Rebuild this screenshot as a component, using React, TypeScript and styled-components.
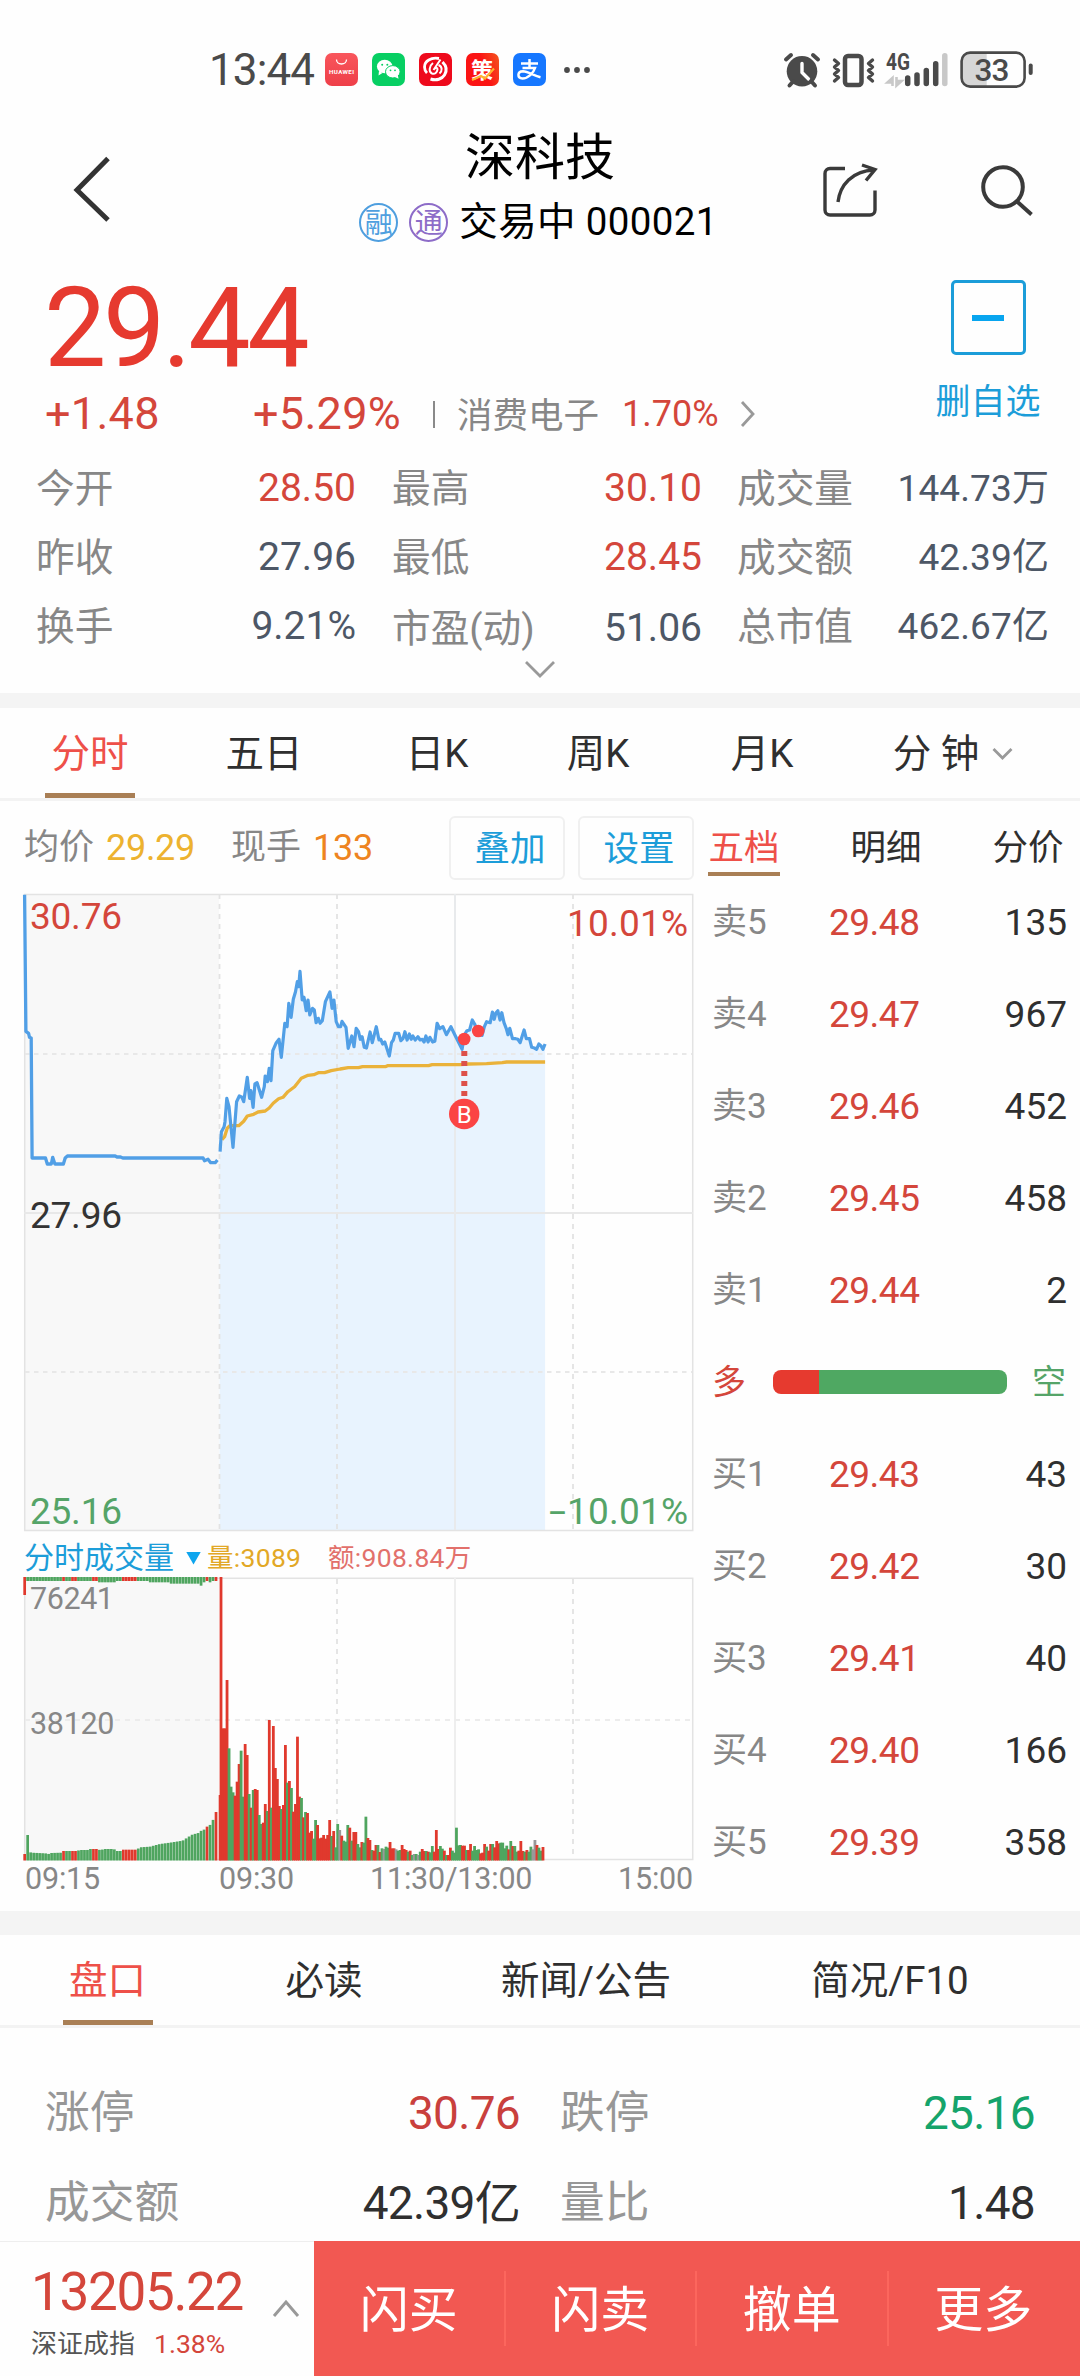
import React from "react";
import styled, { createGlobalStyle } from "styled-components";

const RED = "#d4463b";
const GREEN = "#55a468";
const BLUE = "#1c9dd9";
const GRAY = "#878787";
const INK = "#2f2f2f";
const SLATE = "#4d5766";
const BRONZE = "#a97f55";

const GlobalStyle = createGlobalStyle`
  * { box-sizing: border-box; }
  body {
    margin: 0;
    background: #fefefe;
    font-family: Roboto, "Noto Sans CJK SC", sans-serif;
    color: ${INK};
  }
`;

const Page = styled.main`
  width: 1080px;
  height: 2376px;
  display: flex;
  flex-direction: column;
  background: #fefefe;
  overflow: hidden;
  white-space: nowrap;
`;

/* ---------- status bar ---------- */

const StatusBar = styled.header`
  flex: none;
  height: 104px;
  padding: 35px 52px 0 209px;
  display: flex;
  align-items: center;
  justify-content: space-between;
  color: #4a4a4a;
`;

const StatusGroup = styled.div`
  display: flex;
  align-items: center;
`;

const Clock = styled.span`
  width: 116px;
  font-size: 44px;
  line-height: 50px;
  letter-spacing: -0.9px;
  padding-top: 1px;
`;

const AppBadge = styled.span<{ $bg: string }>`
  width: 33px;
  height: 33px;
  margin-right: 14px;
  border-radius: 7px;
  background: ${(p) => p.$bg};
  display: flex;
  overflow: hidden;
`;

const Dots = styled.svg`
  margin-left: 3px;
`;

/* ---------- title bar ---------- */

const TitleBar = styled.nav`
  flex: none;
  height: 160px;
  display: grid;
  grid-template-columns: 270px 1fr 270px;
`;

const BackSlot = styled.div`
  padding: 50px 0 0 70px;
`;

const TitleBlock = styled.div`
  padding-top: 24px;
  display: flex;
  flex-direction: column;
  align-items: center;
`;

const StockName = styled.h1`
  margin: 0;
  font-size: 50px;
  line-height: 60px;
  font-weight: 400;
  color: #000;
`;

const StockMeta = styled.div`
  display: flex;
  align-items: center;
  height: 44px;
  margin: 12px 3px 0 0;
  font-size: 38.5px;
  line-height: 46px;
  letter-spacing: 0.35px;
  color: #000;
`;

const Mark = styled.span<{ $color: string }>`
  width: 39px;
  height: 39px;
  margin-right: 11px;
  border: 2px solid ${(p) => p.$color};
  border-radius: 50%;
  color: ${(p) => p.$color};
  font-size: 28px;
  line-height: 37px;
  text-align: center;
`;

const ActionSlot = styled.div`
  display: flex;
  gap: 96px;
  padding: 56px 0 0 10px;
`;

/* ---------- quote ---------- */

const Quote = styled.section`
  flex: none;
  height: 188px;
  display: flex;
  justify-content: space-between;
`;

const PriceBlock = styled.div`
  padding: 19px 0 0 44px;
`;

const LastPrice = styled.div`
  font-size: 111px;
  line-height: 90px;
  letter-spacing: -3.3px;
  color: #e63a2f;
`;

const ChangeRow = styled.div`
  display: flex;
  align-items: center;
  height: 50px;
  margin: 16px 0 0 1px;
  line-height: 50px;
`;

const Change = styled.span<{ $w: number }>`
  width: ${(p) => p.$w}px;
  font-size: 45px;
  letter-spacing: 0.3px;
  color: ${RED};
`;

const Sector = styled.span`
  margin-left: 22px;
  padding-top: 3px;
  font-size: 35.5px;
  color: ${GRAY};
`;

const SectorChange = styled.span`
  margin: 0 21px 0 23px;
  font-size: 36px;
  color: ${RED};
`;

const Rule = styled.span`
  width: 2px;
  height: 27px;
  background: #8a8a8a;
`;

const WatchButton = styled.div`
  width: 184px;
  padding-top: 16px;
  display: flex;
  flex-direction: column;
  align-items: center;
  color: ${BLUE};
  font-size: 35px;
  line-height: 44px;
`;

const MinusBox = styled.span`
  width: 75px;
  height: 75px;
  margin-bottom: 26px;
  border: 3px solid ${BLUE};
  border-radius: 5px;
  display: grid;
  place-items: center;
  &::after {
    content: "";
    width: 32px;
    height: 6px;
    background: #08a5ef;
  }
`;

/* ---------- statistics ---------- */

const Stats = styled.section`
  flex: none;
  height: 241px;
  padding: 0 31px 0 36px;
  display: grid;
  grid-template-columns: 320px 346px 1fr;
  grid-auto-rows: 69px;
`;

const Stat = styled.div<{ $col: number; $drop: number }>`
  display: flex;
  justify-content: space-between;
  margin-left: ${(p) => [0, 36, 35][p.$col]}px;
  padding-top: ${(p) => p.$drop}px;
  line-height: 69px;
`;

const StatLabel = styled.span`
  padding-top: 2px;
  font-size: 38.700px;
  color: ${GRAY};
`;

const StatValue = styled.span<{ $color: string; $small?: boolean }>`
  font-size: ${(p) => (p.$small ? 37 : 39)}px;
  letter-spacing: ${(p) => (p.$small ? 0.1 : 0)}px;
  padding-top: 2px;
  color: ${(p) => p.$color};
`;

const Expand = styled.div`
  grid-column: 1 / -1;
  display: flex;
  justify-content: center;
  padding: 1px 6px 0 0;
  height: 34px;
`;

const Band = styled.div<{ $h: number }>`
  flex: none;
  height: ${(p) => p.$h}px;
  background: #f4f4f4;
`;

/* ---------- tabs ---------- */

const Tabs = styled.div<{ $cols: string }>`
  flex: none;
  height: 93px;
  border-bottom: 3px solid #f3f3f3;
  display: grid;
  grid-template-columns: ${(p) => p.$cols};
`;

const Tab = styled.div<{ $active?: boolean }>`
  height: 90px;
  display: flex;
  justify-content: center;
  align-items: center;
  gap: 13px;
  padding-top: 2px;
  font-size: 38.500px;
  line-height: 80px;
  color: ${(p) => (p.$active ? "#ee5049" : INK)};
  background: ${(p) =>
    p.$active ? `linear-gradient(${BRONZE}, ${BRONZE}) center bottom / 90px 5px no-repeat` : "none"};
`;

/* ---------- market area ---------- */

const Market = styled.section`
  flex: none;
  height: 1110px;
  display: grid;
  grid-template-columns: 700px 380px;
`;

const ChartColumn = styled.div`
  display: flex;
  flex-direction: column;
`;

const InfoBar = styled.div`
  height: 89px;
  padding: 4px 0 0 24px;
  display: flex;
  align-items: center;
  font-size: 35px;
  line-height: 60px;
  color: ${GRAY};
`;

const InfoValue = styled.span<{ $color: string; $w: number }>`
  flex: none;
  width: ${(p) => p.$w}px;
  padding-left: 12px;
  font-size: 36px;
  letter-spacing: -0.3px;
  color: ${(p) => p.$color};
`;

const ToolButton = styled.span`
  flex: none;
  width: 116px;
  height: 64px;
  margin-right: 13px;
  padding: 1px 0 0 6px;
  border: 2px solid #f0f0f0;
  border-radius: 6px;
  text-align: center;
  font-size: 35.5px;
  color: ${BLUE};
  &:last-child {
    margin-right: 0;
  }
`;

const VolumeHeader = styled.div`
  height: 40px;
  padding: 8px 0 0 24px;
  display: flex;
  align-items: center;
  line-height: 32px;
`;

const VolumeTitle = styled.span`
  width: 162px;
  font-size: 30px;
  color: ${BLUE};
`;

const VolumeArrow = styled.span`
  width: 15px;
  height: 13px;
  margin-right: 6px;
  background: #0ea5ee;
  clip-path: polygon(0 0, 100% 0, 50% 100%);
`;

const VolumeFigure = styled.span<{ $color: string; $w?: number }>`
  width: ${(p) => (p.$w ? p.$w + "px" : "auto")};
  font-size: 26.500px;
  letter-spacing: 0.300px;
  color: ${(p) => p.$color};
`;

const TimeAxis = styled.div`
  height: 30px;
  display: grid;
  grid-template-columns: 194px 151px 161px 162px;
  padding-left: 25px;
  font-size: 30.5px;
  line-height: 30px;
  letter-spacing: -0.2px;
  color: ${GRAY};
`;

const TimeMark = styled.span<{ $align?: string }>`
  text-align: ${(p) => p.$align || "left"};
`;

const Book = styled.div`
  padding: 0 13px 0 8px;
`;

const BookTabs = styled.div`
  height: 76px;
  padding-right: 3px;
  display: flex;
  justify-content: space-between;
  align-items: flex-start;
`;

const BookTab = styled.span<{ $active?: boolean }>`
  width: 72px;
  height: 75px;
  padding-top: 17px;
  text-align: center;
  font-size: 35.500px;
  line-height: 60px;
  color: ${(p) => (p.$active ? "#ee5049" : INK)};
  border-bottom: 4px solid ${(p) => (p.$active ? BRONZE : "transparent")};
`;

const BookRow = styled.div`
  height: 92px;
  padding-left: 4px;
  display: grid;
  grid-template-columns: 117px 1fr auto;
  align-items: center;
  font-size: 37px;
  line-height: 62px;
`;

const BookLabel = styled.span`
  font-size: 35px;
  color: ${GRAY};
`;

const BookPrice = styled.span`
  letter-spacing: -0.500px;
  color: ${RED};
`;

const BalanceRow = styled.div`
  height: 92px;
  padding: 0 1px 3px 4px;
  display: flex;
  align-items: center;
  justify-content: space-between;
  font-size: 34px;
  line-height: 60px;
`;

const BalanceSide = styled.span<{ $color: string }>`
  color: ${(p) => p.$color};
`;

const Balance = styled.span`
  width: 234px;
  height: 24px;
  margin-left: 2px;
  border-radius: 8px;
  background: linear-gradient(90deg, #e63a2f 46.5px, #4fa862 46.5px);
`;

/* ---------- details ---------- */

const Details = styled.section`
  flex: none;
  height: 213px;
  padding: 39px 45px 0 45px;
  overflow: hidden;
  display: grid;
  grid-template-columns: 475px 1fr;
  grid-auto-rows: 90px;
  column-gap: 40px;
`;

const Detail = styled.div`
  display: flex;
  justify-content: space-between;
  font-size: 44.700px;
  line-height: 92px;
  color: #979797;
`;

const DetailValue = styled.span<{ $color: string }>`
  font-size: 46px;
  letter-spacing: -0.700px;
  color: ${(p) => p.$color};
`;

/* ---------- bottom bar ---------- */

const BottomBar = styled.footer`
  flex: none;
  height: 135px;
  display: flex;
`;

const IndexPanel = styled.div`
  width: 315px;
  border-top: 1px solid #eee;
  display: flex;
  padding: 25px 14px 0 31px;
  justify-content: space-between;
`;

const IndexValue = styled.div`
  font-size: 53px;
  line-height: 50px;
  letter-spacing: -1.3px;
  color: ${RED};
`;

const IndexName = styled.div`
  margin-top: 15px;
  font-size: 26px;
  line-height: 24px;
  color: #555;
`;

const IndexChange = styled.span`
  margin-left: 19px;
  font-size: 26.500px;
  color: ${RED};
`;

const IndexArrow = styled.div`
  padding-top: 30px;
`;

const TradeActions = styled.div`
  flex: 1;
  display: flex;
  background: #f25852;
`;

const TradeAction = styled.span`
  width: 191.500px;
  height: 75px;
  margin-top: 30px;
  font-size: 49px;
  line-height: 79px;
  text-align: center;
  color: #fff;
  border-right: 2px solid #fc665d;
  &:last-child {
    border-right-color: transparent;
  }
`;

/* ---------- icons ---------- */

const StatusIcons = () => (
  <svg width="245" height="40" viewBox="783 49 245 40" fill="none" stroke="#4a4a4a" overflow="visible">
    <circle cx="802" cy="70.3" r="15.3" fill="#4a4a4a" stroke="none" />
    <path d="M802 62.5v9l6.5 6.5" stroke="#fff" strokeWidth="3.4" strokeLinecap="round" strokeLinejoin="round" />
    <path d="M786 58.5l5-4.5M818 58.5l-5-4.5M789.5 84.5l4-4.5M815 84.5l-4-4.5" strokeWidth="4" strokeLinecap="round" />
    <rect x="845" y="55" width="16.500" height="29" rx="3" strokeWidth="4.500" />
    <path d="M834.500 59l4 3.500-4 3.500 4 3.500-4 3.500 4 3.500-4 3.500M872.500 59l-4 3.500 4 3.500-4 3.500 4 3.500-4 3.500 4 3.500" strokeWidth="3.400" strokeLinejoin="round" strokeLinecap="round" />
    <text x="886" y="68.500" fontSize="23" fontWeight="700" fill="#4a4a4a" stroke="none" textLength="24" lengthAdjust="spacingAndGlyphs">4G</text>
    <path d="M892.500 85V77l-5 4.500h4M896.500 76v8.500l5-4.500h-4" stroke="#c8c8c8" strokeWidth="2.600" />
    <path d="M907.700 77v5.500M917 74v8.500M926.300 69.500v13M935.700 62.700v19.800" strokeWidth="5.500" strokeLinecap="round" />
    <path d="M944.800 54.700v27.800" stroke="#c8c8c8" strokeWidth="5.500" strokeLinecap="round" />
    <path d="M986.700 51.500H970a8.500 8.500 0 0 0-8.500 8.500v17a8.500 8.500 0 0 0 8.500 8.500h16.700z" fill="#d6d6d6" stroke="none" />
    <rect x="961.600" y="51.600" width="63" height="34" rx="8.500" strokeWidth="2.600" />
    <path d="M1030.700 64.500v7.500" strokeWidth="4" strokeLinecap="round" />
    <text x="974.500" y="80" fontSize="31.500" fontWeight="500" fill="#4a4a4a" stroke="none" textLength="35" lengthAdjust="spacing">33</text>
  </svg>
);

const StoreGlyph = () => (
  <svg width="33" height="33" viewBox="0 0 33 33">
    <path d="M11.500 6.500a5 4.500 0 0 0 10 0" fill="none" stroke="#fff" strokeWidth="1.300" />
    <text x="4" y="21.300" fontSize="6.200" fontWeight="700" fill="#fff" textLength="25">HUAWEI</text>
  </svg>
);

const ChatGlyph = () => (
  <svg width="33" height="33" viewBox="0 0 33 33">
    <ellipse cx="12.700" cy="13.500" rx="7.800" ry="6.700" fill="#fff" />
    <path d="M7 18l-.5 4.500 4-2.500z" fill="#fff" />
    <ellipse cx="20.800" cy="18.800" rx="7.300" ry="6.200" fill="#fff" stroke="#07cf63" strokeWidth="1" />
    <path d="M23 24l3.500 1.800-.6-3.600z" fill="#fff" />
    <g fill="#07cf63">
      <circle cx="10.200" cy="11.800" r="1" />
      <circle cx="15.300" cy="11.800" r="1" />
      <circle cx="18.500" cy="17.300" r=".9" />
      <circle cx="23" cy="17.300" r=".9" />
    </g>
  </svg>
);

const BrokerGlyph = () => (
  <svg width="33" height="33" viewBox="0 0 33 33" fill="none" stroke="#fff">
    <path d="M20 5.500C12 4 5.500 8 5.500 14c0 2.500 1 4.500 2.500 6" strokeWidth="2.800" />
    <path d="M23.500 9c4 4 4.500 9 2 13-2.500 4-8 6-14 4" strokeWidth="3" />
    <path d="M21.500 6.500L14.500 17M14 10c-4 3-4.500 9-1 10.500 3 1 5-1 5.500-4 .3-2-2-2.500-3-.5" strokeWidth="2" />
    <path d="M19.500 12c4 1.500 4 6 1 8.500" strokeWidth="2" />
  </svg>
);

const StrategyGlyph = () => (
  <svg width="33" height="33" viewBox="0 0 33 33">
    <text x="5" y="25" fontSize="22" fontWeight="700" fill="#fff">策</text>
    <path d="M6 27l9-4 4 2.500 9-10" fill="none" stroke="#ffb22e" strokeWidth="2.200" />
  </svg>
);

const PayGlyph = () => (
  <svg width="33" height="33" viewBox="0 0 33 33">
    <path d="M8 10.500h17M16.500 6v9M9.500 15h12.500c-1.500 5-7 10.500-12.500 10.500-5.500-.5-5.500-7 .5-7.200 5 .2 11 4.500 17.500 6" fill="none" stroke="#fff" strokeWidth="2.500" />
  </svg>
);

const MoreDots = () => (
  <Dots width="28" height="8" viewBox="0 0 28 8" fill="#4a4a4a">
    <circle cx="4" cy="4" r="2.900" />
    <circle cx="14" cy="4" r="2.900" />
    <circle cx="24" cy="4" r="2.900" />
  </Dots>
);

const BackIcon = () => (
  <svg width="44" height="72" viewBox="70 154 44 72" fill="none" stroke="#333" strokeWidth="5">
    <path d="M108 158.500L77 190l31 30" />
  </svg>
);

const ShareIcon = () => (
  <svg width="62" height="62" viewBox="820 160 62 62" fill="none" stroke="#3a3a3a" strokeWidth="3.400">
    <path d="M845 168.500h-15a5 5 0 0 0-5 5v36.500a5 5 0 0 0 5 5h40a5 5 0 0 0 5-5v-19.500" />
    <path d="M838 202c2-17 14-31 36-32" />
    <path d="M862 165l13 4.500-9 11" />
  </svg>
);

const SearchIcon = () => (
  <svg width="60" height="62" viewBox="978 160 60 62" fill="none" stroke="#3a3a3a" strokeWidth="4">
    <circle cx="1003" cy="187" r="19.800" />
    <path d="M1017 201.500l14.500 13" />
  </svg>
);

const Chevron = ({ w, h, d, width = 2.8, color = "#999" }: { w: number; h: number; d: string; width?: number; color?: string }) => (
  <svg width={w} height={h} viewBox={`0 0 ${w} ${h}`} fill="none" stroke={color} strokeWidth={width}>
    <path d={d} />
  </svg>
);

/* ---------- chart data ---------- */

type Pt = [number, number];

const parse = (s: string): Pt[] =>
  s.trim().split(/\s+/).map((p) => {
    const [x, y] = p.split(",").map(Number);
    return [x / 2.24, y / 3 + 800];
  });

const toPath = (pts: Pt[]) => pts.map(([x, y], i) => `${i ? "L" : "M"}${x.toFixed(1)} ${y.toFixed(1)}`).join("");

const auctionLine = parse(`55,284 58,694 64,700 66,712 70,714 72,1074 102,1074 106,1092 115,1092 118,1072 123,1092
142,1092 146,1074 151,1068 258,1068 262,1071 270,1071 275,1074 455,1074 458,1082 466,1078 472,1088 482,1088 487,1080`);

const priceLine = parse(`493,1055 496,995 502,980 504,965 508,895 513,920 522,1042 530,905 536,888 542,892 546,905
554,832 559,895 562,872 567,922 571,852 576,848 586,892 592,860 594,828 599,845 603,805 607,842 611,752 619,728
625,718 630,772 638,670 643,680 647,610 652,652 657,598 662,575 666,545 669,560 672,514 677,600 681,592 686,632
690,600 694,645 700,625 704,630 708,668 713,655 717,670 722,662 729,605 739,576 744,625 748,600 753,665 758,680
763,680 766,664 775,682 780,745 788,708 793,740 798,685 803,695 807,718 811,710 816,742 821,744 829,696 834,728
843,680 849,720 853,718 857,732 862,726 872,768 877,728 881,720 885,700 893,700 898,722 903,715 907,695 912,720
917,702 921,718 925,708 930,720 936,710 941,720 946,718 950,726 954,708 959,726 963,712 969,726 974,724 979,670
985,686 992,680 1000,704 1010,680 1020,708 1035,748 1040,705 1046,692 1052,690 1058,660 1063,672 1070,693
1080,706 1085,680 1090,665 1098,668 1103,636 1107,658 1111,638 1115,632 1120,660 1124,638 1129,668 1134,685
1138,704 1142,685 1148,716 1155,716 1160,718 1165,728 1174,690 1179,716 1186,716 1191,742 1197,744 1202,748
1207,732 1212,738 1216,748 1221,732`);

const averageLine = parse(`497,1019 503,1010 509,985 515,977 535,977 546,964 554,948 568,943 578,936 594,933 603,924
612,910 624,896 634,892 645,875 660,860 675,835 690,826 703,824 713,818 727,818 742,812 762,807 780,803 803,803
812,800 863,800 868,797 960,797 968,794 1030,794 1050,792 1090,791 1125,788 1135,786 1221,786`);

const barColors: Record<string, string> = { r: "#e0392d", g: "#4fa55f", n: "#999" };

/* Each sample is colour + top edge, one per minute of trading. */
const minuteBars = `r141 r595 r595 r450 g655 g770 g787 r797 r755 r702 g662 g800 r642 r675 g792 r833 g780 r777 r780 g855
g882 r878 r822 g843 r570 g833 r588 r714 r747 r828 g837 r825 r645 g758 r753 g774 r845 r822 r620 r800 g804 r862 g846
r849 r908 r903 g926 g870 r885 r925 r923 r915 r926 r915 r870 g918 r903 g952 g882 n900 r917 g932 g935 g885 r893 g932
r906 r906 g942 g952 r936 g938 g860 r924 r930 g960 r962 r945 g945 r966 g955 n957 g950 g953 r936 r955 r955 n958 g962
g960 r945 r957 r960 g965 r962 g975 n972 g972 n975 g965 r957 r963 g963 r965 g967 g948 r965 r900 r957 g948 g956 r962
g975 r975 r953 g962 g968 g893 g946 g945 r947 r947 g960 r960 r942 g962 g948 g960 g958 r970 r968 r942 g950 r962 r942
g942 r952 r933 r940 g938 g938 g955 g947 r958 g933 r948 g948 g965 r962 r933 r963 g965 r960 g965 g950 n958 n930 r945
g953 g962 r951`.trim().split(/\s+/);

const minuteStep = 324 / minuteBars.length;

const auctionTops: Pt[] = [
  [74, 972], [81, 915], [88, 915], [92, 968], [136, 970], [145, 972], [154, 969], [186, 968], [190, 963], [230, 963],
  [240, 960], [262, 960], [270, 957], [290, 957], [300, 960], [316, 957], [342, 957], [348, 963], [362, 963],
  [368, 959], [410, 959], [420, 952], [450, 950], [480, 942], [510, 938], [548, 932], [565, 921], [580, 912],
  [592, 911], [602, 903], [612, 899], [621, 890], [630, 885], [639, 870], [648, 846],
];

const auctionTopAt = (x: number) => {
  for (let i = 1; i < auctionTops.length; i++) {
    const [x0, y0] = auctionTops[i - 1];
    const [x1, y1] = auctionTops[i];
    if (x <= x1) return y0 + ((y1 - y0) * (x - x0)) / (x1 - x0);
  }
  return 846;
};

const redRanges: Pt[] = [[70, 78], [187, 196], [214, 234], [274, 292], [364, 414], [617, 623], [645, 652]];
const isRed = (x: number) => redRanges.some(([a, b]) => x >= a && x <= b);

const hangAt = (x: number) => {
  if (x < 78) return 195;
  if (x > 292 && x < 345) return 157;
  if (x > 598 && x < 606) return 167;
  if (x > 510 && x < 598) return 161;
  if (x > 450 && x <= 510) return 157;
  if (x > 606 && x < 636 && !isRed(x)) return 157;
  return 153;
};

const auctionXs = Array.from({ length: 65 }, (_, i) => 74 + i * 8.97);

const GRID = "#e3e3e3";

const PriceChart = () => (
  <svg width="700" height="644" viewBox="0 890 700 644" fontSize="37">
    <rect x="25" y="894.500" width="194" height="636" fill="#f8f8f8" />
    <path d={`${toPath(priceLine)}V1530H219.500V1150Z`} fill="#e8f3fe" />
    <g stroke={GRID} fill="none">
      <rect x="24.700" y="894.500" width="668" height="636" strokeWidth="1.500" />
      <path d="M24 1213H693" strokeWidth="2" stroke="#e8e8e8" />
      <path d="M455 894V1530" strokeWidth="2" stroke="#e8eaec" />
      <path d="M25 1054H692M25 1372H692" strokeWidth="1.800" strokeDasharray="4.500 4.500" stroke="#e8e8e8" />
      <path d="M219.500 894V1530M337 894V1530M573 894V1530" strokeWidth="1.800" strokeDasharray="5 5" />
    </g>
    <path d={toPath(auctionLine)} fill="none" stroke="#519fe6" strokeWidth="3.300" strokeLinejoin="round" />
    <path d={toPath(averageLine)} fill="none" stroke="#eab23a" strokeWidth="3.300" strokeLinejoin="round" />
    <path d={toPath(priceLine)} fill="none" stroke="#519fe6" strokeWidth="3.200" strokeLinejoin="round" />
    <path d="M464.300 1051V1097" stroke="#dd5049" strokeWidth="6" strokeDasharray="5 5" />
    <g fill="#fb4444">
      <circle cx="464.200" cy="1039" r="6.300" />
      <circle cx="478.200" cy="1031" r="6.300" />
      <circle cx="464.200" cy="1114" r="15.200" />
    </g>
    <text x="464.300" y="1122.500" fontSize="24" fill="#fff" textAnchor="middle">B</text>
    <g fill={RED}>
      <text x="30" y="929" textLength="92">30.76</text>
      <text x="567" y="936" textLength="121">10.01%</text>
    </g>
    <text x="30" y="1228.300" textLength="92" fill="#333">27.96</text>
    <g fill={GREEN}>
      <text x="30" y="1524" textLength="92">25.16</text>
      <text x="567" y="1524" textLength="121">10.01%</text>
      <text x="549" y="1524" textLength="17" lengthAdjust="spacingAndGlyphs">-</text>
    </g>
  </svg>
);

const VolumeChart = () => (
  <svg width="700" height="290" viewBox="0 1574 700 290" fontSize="30.500" fill={GRAY}>
    <rect x="25" y="1578" width="194" height="281" fill="#f8f8f8" />
    <g stroke={GRID} fill="none">
      <rect x="24.700" y="1578.300" width="668" height="281.200" strokeWidth="1.500" />
      <path d="M455 1578V1860" strokeWidth="2" stroke="#eee" />
      <path d="M25 1720H692" strokeWidth="1.800" strokeDasharray="5 5" stroke="#ececec" />
      <path d="M337 1579V1860M573 1579V1860" strokeWidth="1.800" strokeDasharray="5 5" />
    </g>
    {auctionXs.map((x, i) => {
      const top = auctionTopAt(x) / 3 + 1530;
      const color = isRed(x) ? barColors.r : barColors.g;
      return (
        <g key={i} fill={color}>
          <rect x={x / 3 - 1.35} y={top} width="2.700" height={1860.5 - top} />
          <rect x={x / 3 - 1.35} y="1577" width="2.700" height={hangAt(x) / 3 - 47} />
        </g>
      );
    })}
    <rect x="218.700" y="1795" width="2" height="65.500" fill={barColors.r} />
    {minuteBars.map((b, i) => {
      const top = Number(b.slice(1)) / 3 + 1530;
      return <rect key={i} x={219.6 + i * minuteStep} y={top} width="2.800" height={1860.5 - top} fill={barColors[b[0]]} />;
    })}
    <text x="30" y="1608.500" textLength="84">76241</text>
    <text x="30" y="1734" textLength="84.500">38120</text>
  </svg>
);

/* ---------- content ---------- */

const stats = [
  ["今开", "28.50", RED], ["最高", "30.10", RED], ["成交量", "144.73万", SLATE],
  ["昨收", "27.96", SLATE], ["最低", "28.45", RED], ["成交额", "42.39亿", SLATE],
  ["换手", "9.21%", SLATE], ["市盈(动)", "51.06", SLATE], ["总市值", "462.67亿", SLATE],
];

const asks = [["卖5", "29.48", "135"], ["卖4", "29.47", "967"], ["卖3", "29.46", "452"], ["卖2", "29.45", "458"], ["卖1", "29.44", "2"]];
const bids = [["买1", "29.43", "43"], ["买2", "29.42", "30"], ["买3", "29.41", "40"], ["买4", "29.40", "166"], ["买5", "29.39", "358"]];

const details = [["涨停", "30.76", "#c9403d"], ["跌停", "25.16", "#15a46b"], ["成交额", "42.39亿", INK], ["量比", "1.48", INK]];

const Levels = ({ rows }: { rows: string[][] }) => (
  <>
    {rows.map(([label, price, qty]) => (
      <BookRow key={label}>
        <BookLabel>{label}</BookLabel>
        <BookPrice>{price}</BookPrice>
        <span>{qty}</span>
      </BookRow>
    ))}
  </>
);

export default function App() {
  return (
    <Page>
      <GlobalStyle />
      <StatusBar>
        <StatusGroup>
          <Clock>13:44</Clock>
          <AppBadge $bg="linear-gradient(#f9565c, #ee3f49)"><StoreGlyph /></AppBadge>
          <AppBadge $bg="#07cf63"><ChatGlyph /></AppBadge>
          <AppBadge $bg="#ee0a1c"><BrokerGlyph /></AppBadge>
          <AppBadge $bg="linear-gradient(70deg, #fb1414 55%, #f4571f)"><StrategyGlyph /></AppBadge>
          <AppBadge $bg="#1677ff"><PayGlyph /></AppBadge>
          <MoreDots />
        </StatusGroup>
        <StatusIcons />
      </StatusBar>

      <TitleBar>
        <BackSlot><BackIcon /></BackSlot>
        <TitleBlock>
          <StockName>深科技</StockName>
          <StockMeta>
            <Mark $color="#4f9fdf">融</Mark>
            <Mark $color="#8d6cc8">通</Mark>
            交易中 000021
          </StockMeta>
        </TitleBlock>
        <ActionSlot>
          <ShareIcon />
          <SearchIcon />
        </ActionSlot>
      </TitleBar>

      <Quote>
        <PriceBlock>
          <LastPrice>29.44</LastPrice>
          <ChangeRow>
            <Change $w={208}>+1.48</Change>
            <Change $w={180}>+5.29%</Change>
            <Rule />
            <Sector>消费电子</Sector>
            <SectorChange>1.70%</SectorChange>
            <Chevron w={16} h={28} d="M2 2l11 12L2 26" />
          </ChangeRow>
        </PriceBlock>
        <WatchButton>
          <MinusBox />
          删自选
        </WatchButton>
      </Quote>

      <Stats>
        {stats.map(([label, value, color], i) => (
          <Stat key={label} $col={i % 3} $drop={i === 7 ? 2 : 0}>
            <StatLabel>{label}</StatLabel>
            <StatValue $color={color} $small={i % 3 === 2}>{value}</StatValue>
          </Stat>
        ))}
        <Expand>
          <Chevron w={34} h={20} d="M3 2l14 14L31 2" />
        </Expand>
      </Stats>
      <Band $h={15} />

      <Tabs $cols="180px 168px 178px 144px 184px 198px">
        <Tab $active>分时</Tab>
        <Tab>五日</Tab>
        <Tab>日K</Tab>
        <Tab>周K</Tab>
        <Tab>月K</Tab>
        <Tab>
          分 钟
          <Chevron w={21} h={14} d="M1.500 2l9 9 9-9" />
        </Tab>
      </Tabs>

      <Market>
        <ChartColumn>
          <InfoBar>
            均价<InfoValue $color="#edb22f" $w={137}>29.29</InfoValue>
            现手<InfoValue $color="#ee8420" $w={148}>133</InfoValue>
            <ToolButton>叠加</ToolButton>
            <ToolButton>设置</ToolButton>
          </InfoBar>
          <PriceChart />
          <VolumeHeader>
            <VolumeTitle>分时成交量</VolumeTitle>
            <VolumeArrow />
            <VolumeFigure $color="#e2a826" $w={121}>量:3089</VolumeFigure>
            <VolumeFigure $color="#e2706b">额:908.84万</VolumeFigure>
          </VolumeHeader>
          <VolumeChart />
          <TimeAxis>
            <TimeMark>09:15</TimeMark>
            <TimeMark>09:30</TimeMark>
            <TimeMark>11:30/13:00</TimeMark>
            <TimeMark $align="right">15:00</TimeMark>
          </TimeAxis>
        </ChartColumn>
        <Book>
          <BookTabs>
            <BookTab $active>五档</BookTab>
            <BookTab>明细</BookTab>
            <BookTab>分价</BookTab>
          </BookTabs>
          <Levels rows={asks} />
          <BalanceRow>
            <BalanceSide $color={RED}>多</BalanceSide>
            <Balance />
            <BalanceSide $color={GREEN}>空</BalanceSide>
          </BalanceRow>
          <Levels rows={bids} />
        </Book>
      </Market>
      <Band $h={24} />

      <Tabs $cols="215px 218px 306px 302px">
        <Tab $active>盘口</Tab>
        <Tab>必读</Tab>
        <Tab>新闻/公告</Tab>
        <Tab>简况/F10</Tab>
      </Tabs>

      <Details>
        {details.map(([label, value, color]) => (
          <Detail key={label}>
            {label}
            <DetailValue $color={color}>{value}</DetailValue>
          </Detail>
        ))}
      </Details>

      <BottomBar>
        <IndexPanel>
          <div>
            <IndexValue>13205.22</IndexValue>
            <IndexName>
              深证成指<IndexChange>1.38%</IndexChange>
            </IndexName>
          </div>
          <IndexArrow>
            <Chevron w={28} h={22} d="M2 19L14 5l12 14" width={3} />
          </IndexArrow>
        </IndexPanel>
        <TradeActions>
          <TradeAction>闪买</TradeAction>
          <TradeAction>闪卖</TradeAction>
          <TradeAction>撤单</TradeAction>
          <TradeAction>更多</TradeAction>
        </TradeActions>
      </BottomBar>
    </Page>
  );
}
